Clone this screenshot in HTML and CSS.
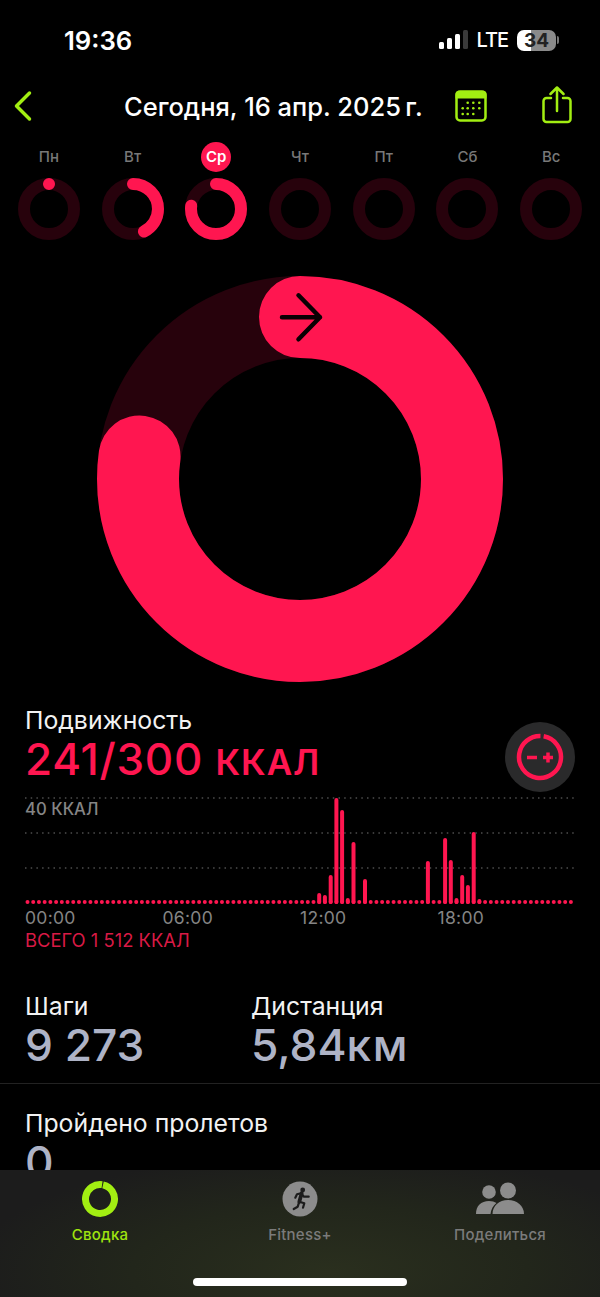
FILE: index.html
```html
<!DOCTYPE html>
<html lang="ru">
<head>
    <meta charset="UTF-8">
    <meta name="viewport" content="width=device-width, initial-scale=1.0">
    <title>Активность</title>
    <link rel="stylesheet" href="styles.css">
</head>
<body>

<div class="phone">
    <main class="content">

        <!-- status bar -->
        <div class="status">
            <span class="time">19:36</span>
            <div class="status-right">
                <svg class="signal" width="30" height="20" viewBox="0 0 30 20">
                    <rect x="0" y="12" width="5" height="7" rx="1.5" fill="#fff"/>
                    <rect x="8" y="8" width="5" height="11" rx="1.5" fill="#fff"/>
                    <rect x="16" y="4" width="5" height="15" rx="1.5" fill="#fff"/>
                    <rect x="24" y="0" width="5" height="19" rx="1.5" fill="#3a3a3a"/>
                </svg>
                <span class="lte">LTE</span>
                <div class="battery"><span class="battery-num">34</span></div>
                <div class="battery-nub"></div>
            </div>
        </div>

        <!-- nav -->
        <div class="nav">
            <svg class="back" width="20" height="32" viewBox="0 0 20 32">
                <path d="M16.5 3 L3.5 16 L16.5 29" />
            </svg>
            <span class="nav-title">Сегодня, 16 апр. 2025&#8239;г.</span>
            <svg class="cal" width="34" height="32" viewBox="0 0 34 32">
                <rect x="1.5" y="1.5" width="29" height="29" rx="3.5" class="cal-frame"/>
                <path d="M3.500 1h25a3 3 0 0 1 3 3V8.500H.5V4a3 3 0 0 1 3-3z" class="cal-head"/>
                <g class="cal-dots">
                    <circle cx="12.700" cy="12.700" r="1.300"/><circle cx="18.300" cy="12.700" r="1.300"/><circle cx="24.300" cy="12.700" r="1.300"/>
                    <circle cx="7.700" cy="18.300" r="1.300"/><circle cx="12.700" cy="18.300" r="1.300"/><circle cx="18.300" cy="18.300" r="1.300"/><circle cx="24.300" cy="18.300" r="1.300"/>
                    <circle cx="7.700" cy="24" r="1.300"/><circle cx="12.700" cy="24" r="1.300"/><circle cx="18.300" cy="24" r="1.300"/>
                </g>
            </svg>
            <svg class="share" width="32" height="38" viewBox="0 0 32 38">
                <path d="M10 12H5.500a3 3 0 0 0-3 3v18a3 3 0 0 0 3 3h21a3 3 0 0 0 3-3V15a3 3 0 0 0-3-3H22"/>
                <path d="M16 25V2M9.500 8L16 1.500L22.500 8"/>
            </svg>
        </div>

        <!-- week -->
        <div class="week">
            <div class="day">
                <span class="day-name">Пн</span>
                <svg class="mini" width="62" height="62" viewBox="0 0 62 62">
                    <circle class="track" cx="31" cy="31" r="25"/>
                    <circle class="prog" cx="31" cy="31" r="25" pathLength="360" stroke-dasharray="0.100 360" transform="rotate(-90 31 31)"/>
                </svg>
            </div>
            <div class="day">
                <span class="day-name">Вт</span>
                <svg class="mini" width="62" height="62" viewBox="0 0 62 62">
                    <circle class="track" cx="31" cy="31" r="25"/>
                    <circle class="prog" cx="31" cy="31" r="25" pathLength="360" stroke-dasharray="154 360" transform="rotate(-90 31 31)"/>
                </svg>
            </div>
            <div class="day">
                <span class="day-name today">Ср</span>
                <svg class="mini" width="62" height="62" viewBox="0 0 62 62">
                    <circle class="track" cx="31" cy="31" r="25"/>
                    <circle class="prog" cx="31" cy="31" r="25" pathLength="360" stroke-dasharray="278 360" transform="rotate(-90 31 31)"/>
                </svg>
            </div>
            <div class="day">
                <span class="day-name">Чт</span>
                <svg class="mini" width="62" height="62" viewBox="0 0 62 62"><circle class="track" cx="31" cy="31" r="25"/></svg>
            </div>
            <div class="day">
                <span class="day-name">Пт</span>
                <svg class="mini" width="62" height="62" viewBox="0 0 62 62"><circle class="track" cx="31" cy="31" r="25"/></svg>
            </div>
            <div class="day">
                <span class="day-name">Сб</span>
                <svg class="mini" width="62" height="62" viewBox="0 0 62 62"><circle class="track" cx="31" cy="31" r="25"/></svg>
            </div>
            <div class="day">
                <span class="day-name">Вс</span>
                <svg class="mini" width="62" height="62" viewBox="0 0 62 62"><circle class="track" cx="31" cy="31" r="25"/></svg>
            </div>
        </div>

        <!-- big ring -->
        <div class="big-ring">
            <svg width="406" height="406" viewBox="0 0 406 406">
                <circle class="track-big" cx="203" cy="203" r="162"/>
                <circle class="prog-big" cx="203" cy="203" r="162" pathLength="360" stroke-dasharray="278 360" transform="rotate(-90 203 203)"/>
                <path class="arrow" d="M185 41.300H223M201.500 19.300L223 41.300L201.500 63.300"/>
            </svg>
        </div>

        <!-- move -->
        <section class="move">
            <div class="move-head">
                <div>
                    <div class="stat-label">Подвижность</div>
                    <div class="move-value">241/300 <span class="move-unit">ККАЛ</span></div>
                </div>
                <button class="goal-btn">
                    <svg width="48" height="48" viewBox="0 0 48 48">
                        <circle class="goal-ring" cx="24" cy="24" r="21" pathLength="360" stroke-dasharray="351 9" transform="rotate(-80 24 24)"/>
                        <path class="goal-sign" d="M11 24.500h10M27 24.500h10M32 19.500v10"/>
                    </svg>
                </button>
            </div>

            <div class="chart">
                <span class="chart-max">40 ККАЛ</span>
                <svg width="600" height="112" viewBox="0 796 600 112">
                    <g class="grid">
                        <line x1="25" y1="798" x2="575" y2="798"/>
                        <line x1="25" y1="833" x2="575" y2="833"/>
                        <line x1="25" y1="868" x2="575" y2="868"/>
                    </g>
                    <line class="base" x1="27.500" y1="902" x2="573" y2="902"/>
                    <path class="bars" d="M319.200 895V902M324.900 897V902M330.700 877V902M336.400 800V902M342.100 812V902M347.800 900V902M353.500 844V902M365 881V902M427.900 863V902M445.100 840V902M450.800 862V902M456.500 900V902M462.200 877V902M467.900 887V902M473.700 834V902M479.400 901V902"/>
                </svg>
            </div>
            <div class="hours">
                <span>00:00</span><span>06:00</span><span>12:00</span><span>18:00</span>
            </div>
            <div class="total">ВСЕГО 1 512 ККАЛ</div>
        </section>

        <!-- stats -->
        <section class="stats">
            <div class="stat stat-steps">
                <div class="stat-label">Шаги</div>
                <div class="stat-value">9 273</div>
            </div>
            <div class="stat">
                <div class="stat-label">Дистанция</div>
                <div class="stat-value">5,84<span class="stat-unit">км</span></div>
            </div>
        </section>

        <section class="flights">
            <div class="stat-label">Пройдено пролетов</div>
            <div class="stat-value">0</div>
        </section>
    </main>

    <!-- tab bar -->
    <nav class="tabbar">
        <div class="tab tab-active">
            <svg width="38" height="38" viewBox="0 0 38 38">
                <circle class="tab-ring" cx="19" cy="19" r="14.500" pathLength="360" stroke-dasharray="356 4" transform="rotate(-78 19 19)"/>
            </svg>
            <span>Сводка</span>
        </div>
        <div class="tab">
            <svg width="38" height="38" viewBox="0 0 38 38">
                <circle cx="19" cy="19" r="17.500" fill="#8c8c8c"/>
                <circle cx="21.700" cy="10" r="2.400" fill="#1c1c1c"/>
                <path class="runner" d="M20 13.300L16 14.300L14.300 17.700M20.700 14L22.700 16.700L27.700 16.700M18.300 21.700L23.300 23.300L22 27.700M18.300 21.700L16.700 26.700L12.700 29"/>
                <path class="runner-body" d="M20.700 13.300L18.300 21.700"/>
            </svg>
            <span>Fitness+</span>
        </div>
        <div class="tab">
            <svg width="50" height="38" viewBox="0 0 50 38">
                <circle cx="14" cy="12" r="6.800" fill="#8c8c8c"/>
                <circle cx="33" cy="10.500" r="8" fill="#8c8c8c"/>
                <path d="M1 34c0-8 5-13 13-13 3 0 5.500 .7 7.500 2-3.500 2.800-5.500 6.500-6 11z" fill="#8c8c8c"/>
                <path d="M17.500 34c0-8 6.500-14 15.500-14s16 6 16 14z" fill="#8c8c8c"/>
            </svg>
            <span>Поделиться</span>
        </div>
        <div class="home-bar"></div>
    </nav>
</div>

</body>
</html>
```

FILE: styles.css
```css
* {
    margin: 0;
    padding: 0;
    box-sizing: border-box;
    font-family: Inter, "Noto Sans", sans-serif;
}

body {
    background-color: #000;
    color: #fff;
}

svg {
    display: block;
}

.phone {
    width: 600px;
    height: 1297px;
    overflow: hidden;
}

.content {
    height: 1170px;
    overflow: hidden;
}

/* status bar */
.status {
    height: 80px;
    display: flex;
    align-items: center;
    justify-content: space-between;
    padding: 0 41px 0 64px;
}

.time {
    font-size: 25.700px;
    font-weight: 600;
}

.status-right {
    display: flex;
    align-items: center;
}

.signal {
    margin-right: 7px;
}

.lte {
    font-size: 20px;
    font-weight: 500;
    letter-spacing: -1px;
    margin-right: 9px;
}

.battery {
    width: 39px;
    height: 21px;
    border-radius: 7px;
    background: linear-gradient(to right, #fff 0, #fff 36%, #8a8a8a 36%, #8a8a8a 100%);
    display: flex;
    align-items: center;
    justify-content: center;
}

.battery-num {
    font-size: 19px;
    font-weight: 700;
    color: #222;
}

.battery-nub {
    width: 2px;
    height: 8px;
    margin-left: 1px;
    border-radius: 0 2px 2px 0;
    background-color: #777;
}

/* nav */
.nav {
    height: 52px;
    display: flex;
    align-items: center;
    padding: 0 0 0 13px;
}

.back path {
    fill: none;
    stroke: #a2ee12;
    stroke-width: 3.500;
    stroke-linecap: round;
    stroke-linejoin: round;
}

.nav-title {
    font-size: 25.500px;
    font-weight: 500;
    margin-left: 91px;
    width: 331px;
    white-space: nowrap;
}

.cal-frame {
    fill: none;
    stroke: #a2ee12;
    stroke-width: 2.500;
}

.cal-head,
.cal-dots {
    fill: #a2ee12;
}

.share {
    margin-left: 51.500px;
    margin-top: -2px;
}

.share path {
    fill: none;
    stroke: #a2ee12;
    stroke-width: 2.500;
    stroke-linecap: round;
    stroke-linejoin: round;
}

/* week */
.week {
    display: grid;
    grid-template-columns: repeat(7, 1fr);
    padding: 0 7px;
    margin-top: 10px;
}

.day {
    display: flex;
    flex-direction: column;
    align-items: center;
}

.day-name {
    width: 30px;
    height: 30px;
    line-height: 30px;
    border-radius: 50%;
    text-align: center;
    font-size: 15px;
    font-weight: 500;
    color: #787878;
}

.today {
    background-color: #ff1650;
    color: #fff;
    font-weight: 600;
}

.mini {
    margin-top: 6px;
}

.track {
    fill: none;
    stroke: #27020c;
    stroke-width: 12;
}

.prog {
    fill: none;
    stroke: #ff1650;
    stroke-width: 12;
    stroke-linecap: round;
}

/* big ring */
.big-ring {
    display: flex;
    justify-content: center;
    margin-top: 36px;
}

.track-big {
    fill: none;
    stroke: #27020c;
    stroke-width: 82;
}

.prog-big {
    fill: none;
    stroke: #ff1650;
    stroke-width: 82;
    stroke-linecap: round;
}

.arrow {
    fill: none;
    stroke: #0a0003;
    stroke-width: 4.500;
    stroke-linecap: round;
    stroke-linejoin: round;
}

/* move */
.move {
    margin-top: 24px;
}

.move-head {
    height: 86px;
    display: flex;
    align-items: flex-end;
    justify-content: space-between;
    padding: 0 25px;
}

.stat-label {
    font-size: 24.800px;
    line-height: 28px;
    color: #f2f2f2;
}

.move-value {
    margin-top: 2px;
    font-size: 44px;
    line-height: 46px;
    font-weight: 500;
    letter-spacing: .7px;
    color: #ff1650;
    white-space: nowrap;
    height: 56px;
}

.move-unit {
    font-size: 35px;
    font-weight: 600;
    letter-spacing: 1px;
}

.goal-btn {
    width: 70px;
    height: 70px;
    border: none;
    border-radius: 50%;
    background-color: #2a2a2b;
    display: flex;
    align-items: center;
    justify-content: center;
}

.goal-ring {
    fill: none;
    stroke: #ff1650;
    stroke-width: 4.500;
}

.goal-sign {
    fill: none;
    stroke: #ff1650;
    stroke-width: 3.500;
}

.chart {
    position: relative;
    margin-top: 4px;
}

.chart-max {
    position: absolute;
    left: 25px;
    top: 3px;
    font-size: 16.700px;
    line-height: 20px;
    font-weight: 500;
    color: #858585;
}

.grid line {
    stroke: #4d4d4d;
    stroke-width: 1.500;
    stroke-dasharray: 1.500 4.200;
}

.base {
    stroke: #ff1650;
    stroke-width: 4;
    stroke-linecap: round;
    stroke-dasharray: 0 5.720;
}

.bars {
    fill: none;
    stroke: #ff1650;
    stroke-width: 4;
    stroke-linecap: round;
}

.hours {
    display: grid;
    grid-template-columns: repeat(4, 137.500px);
    padding: 0 25px;
    height: 20px;
    font-size: 17.500px;
    letter-spacing: .3px;
    line-height: 20px;
    color: #858585;
}

.total {
    margin-top: 2px;
    padding: 0 25px;
    font-size: 18.400px;
    line-height: 20px;
    color: #d81a45;
}

/* stats */
.stats {
    display: flex;
    margin-top: 42px;
    padding: 0 25px 14px;
    border-bottom: 1px solid #222;
    height: 92px;
}

.stat-steps {
    width: 226px;
}

.stat-value {
    font-size: 44.300px;
    line-height: 50px;
    font-weight: 500;
    color: #aeb3c6;
    white-space: nowrap;
}

.stat-unit {
    font-size: 44.300px;
    letter-spacing: 1.500px;
}

.flights {
    padding: 25px 25px 0;
}

/* tab bar */
.tabbar {
    position: relative;
    height: 127px;
    display: grid;
    grid-template-columns: repeat(3, 200px);
    background: radial-gradient(ellipse 360px 120px at 55% 80%, #2a2f1e 0, #22261b 55%, #1c1c1c 100%);
    padding-top: 10px;
}

.tab {
    display: flex;
    flex-direction: column;
    align-items: center;
    font-size: 15px;
    letter-spacing: .25px;
    line-height: 20px;
    font-weight: 500;
    color: #7b7b7b;
}

.tab span {
    margin-top: 7px;
}

.tab-active {
    color: #9fe30f;
}

.tab-ring {
    fill: none;
    stroke: #a2ee12;
    stroke-width: 7;
}

.runner {
    fill: none;
    stroke: #1c1c1c;
    stroke-width: 2.200;
    stroke-linecap: round;
    stroke-linejoin: round;
}

.runner-body {
    fill: none;
    stroke: #1c1c1c;
    stroke-width: 3.800;
    stroke-linecap: round;
}

.home-bar {
    position: absolute;
    left: 193px;
    top: 108px;
    width: 214px;
    height: 8px;
    border-radius: 4px;
    background-color: #fff;
}
```
